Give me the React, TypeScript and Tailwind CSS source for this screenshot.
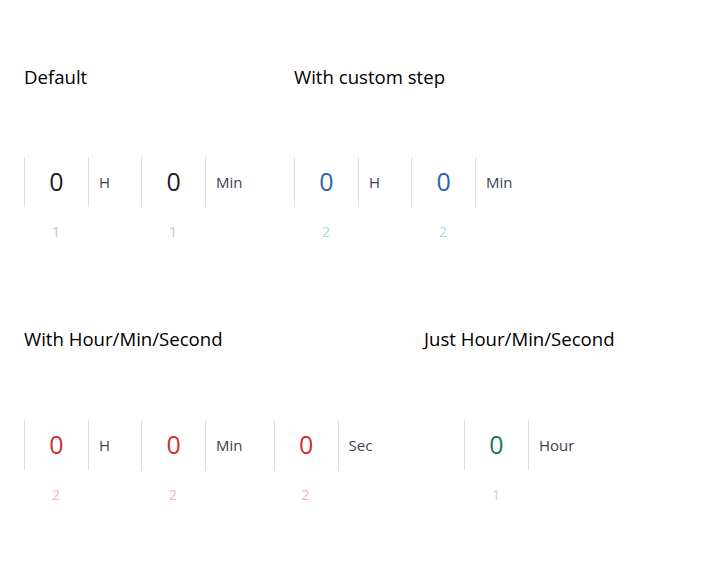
import React from 'react';

type Unit = { label: string };

type Theme = { value: string; step: string };

const themes: Record<string, Theme> = {
    dark: { value: 'text-[#1c1c1c]', step: 'text-[#c4c4c4]' },
    blue: { value: 'text-[#2a64b0]', step: 'text-[#b6d1ee]' },
    red: { value: 'text-[#d0312d]', step: 'text-[#f5b5b4]' },
    green: { value: 'text-[#147a5a]', step: 'text-[#b3e0cd]' },
};

function TimeUnit({ label, step, theme }: { label: string; step: number; theme: Theme }) {
    return (
        <div className="flex items-start">
            <div className="flex flex-col items-center w-16">
                <div className={`w-16 h-[50px] border-l border-[#dedede] flex items-center justify-center text-[25px] ${theme.value}`}>
                    0
                </div>
                <div className={`mt-[15px] text-[14px] leading-5 ${theme.step}`}>{step}</div>
            </div>
            <div className="h-[50px] border-l border-[#dedede] pl-[10px] pr-[31px] flex items-center text-[15px] text-[#3a4350]">
                {label}
            </div>
        </div>
    );
}

function Section({
    title,
    units,
    step,
    theme,
    className = '',
    timerClass = 'mt-[67px]',
}: {
    title: string;
    units: Unit[];
    step: number;
    theme: Theme;
    className?: string;
    timerClass?: string;
}) {
    return (
        <div className={className}>
            <h2 className="text-[18.6px] leading-[27px] text-black">{title}</h2>
            <div className={`flex ${timerClass}`}>
                {units.map((u) => (
                    <TimeUnit key={u.label} label={u.label} step={step} theme={theme} />
                ))}
            </div>
        </div>
    );
}

export default function App() {
    return (
        <div className="min-h-screen bg-white pt-[63px] pl-6 font-['Open_Sans',sans-serif]">
            {/* Row 1 */}
            <div className="flex">
                <Section
                    className="w-[270px]"
                    title="Default"
                    units={[{ label: 'H' }, { label: 'Min' }]}
                    step={1}
                    theme={themes.dark}
                />
                <Section
                    title="With custom step"
                    units={[{ label: 'H' }, { label: 'Min' }]}
                    step={2}
                    theme={themes.blue}
                />
            </div>

            {/* Row 2 */}
            <div className="flex mt-[83px]">
                <Section
                    className="w-[400px]"
                    title="With Hour/Min/Second"
                    units={[{ label: 'H' }, { label: 'Min' }, { label: 'Sec' }]}
                    step={2}
                    theme={themes.red}
                    timerClass="mt-[68px]"
                />
                <Section
                    title="Just Hour/Min/Second"
                    units={[{ label: 'Hour' }]}
                    step={1}
                    theme={themes.green}
                    timerClass="mt-[68px] ml-10"
                />
            </div>
        </div>
    );
}
